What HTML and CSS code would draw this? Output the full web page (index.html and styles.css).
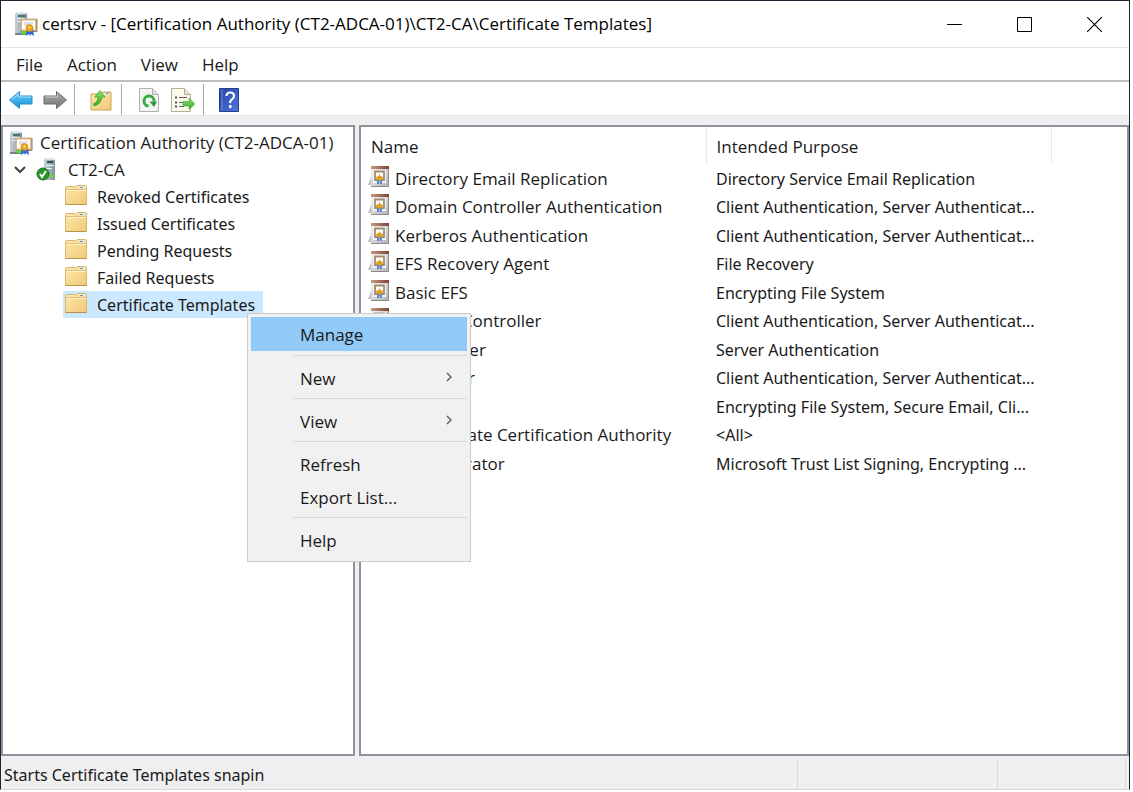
FILE: index.html
```html
<!DOCTYPE html>
<html lang="en">
<head>
<meta charset="utf-8">
<title>certsrv</title>
<link rel="stylesheet" href="styles.css">
</head>
<body>
<svg class="defs" width="0" height="0" aria-hidden="true">
  <defs>
    <linearGradient id="gTower" x1="0" x2="1" y1="0" y2="0"><stop offset="0" stop-color="#c3d2d8"/><stop offset="1" stop-color="#7e929c"/></linearGradient>
    <linearGradient id="gFolder" x1="0" x2="1" y1="0" y2="1"><stop offset="0" stop-color="#ffeaaa"/><stop offset="1" stop-color="#efc878"/></linearGradient>
    <linearGradient id="gBlue" x1="0" x2="0" y1="0" y2="1"><stop offset="0" stop-color="#6fcdf8"/><stop offset="1" stop-color="#1492dc"/></linearGradient>
    <linearGradient id="gGray" x1="0" x2="0" y1="0" y2="1"><stop offset="0" stop-color="#ababab"/><stop offset="1" stop-color="#747474"/></linearGradient>
    <linearGradient id="gGreen" x1="0" x2="0" y1="0" y2="1"><stop offset="0" stop-color="#8ce068"/><stop offset="1" stop-color="#35a62c"/></linearGradient>
    <linearGradient id="gHelp" x1="0" x2="1" y1="0" y2="1"><stop offset="0" stop-color="#2442a4"/><stop offset="1" stop-color="#4f7be0"/></linearGradient>
    <linearGradient id="gTop" x1="0" x2="1" y1="0" y2="0"><stop offset="0" stop-color="#c9967f"/><stop offset="1" stop-color="#7d4337"/></linearGradient>
    <linearGradient id="gPlate" x1="0" x2="1" y1="0" y2="1"><stop offset="0" stop-color="#f8f8f8"/><stop offset="1" stop-color="#b0b0b0"/></linearGradient>
    <symbol id="authority" viewBox="0 0 24 24">
      <path d="M1 2 3 0h10v23H1z" fill="url(#gTower)"/>
      <path d="M3 0h10v2H3z" fill="#dde6e9"/>
      <path d="M4 3h7v2H4z" fill="#4a7375"/><path d="M3 6h8v1H3zM3 9h3v1H3z" fill="#edf3f5"/>
      <path d="M1 21h12v2H1z" fill="#71838c"/>
      <path d="M7 7.500h15v11H7z" fill="#fff" stroke="#d3b184" stroke-width="1.800"/>
      <path d="M23 7v12.500H7" fill="none" stroke="#9a7a5c"/>
      <path d="M10 11h9M10 13h6" stroke="#b9c4e4"/>
      <path d="M8 19h4v3H8z" fill="#5ae020"/>
      <path d="m13 17-1 7 3-2 1 2 1-2 3 2-1-7z" fill="#3269df"/>
      <circle cx="15.500" cy="16" r="3.500" fill="#e5a51c" stroke="#cf9110" stroke-width=".8"/><circle cx="15.500" cy="15.500" r="1.200" fill="#ffd969"/>
    </symbol>
    <symbol id="server" viewBox="0 0 20 24">
      <path d="M8 2 10 0h9v22H8z" fill="url(#gTower)"/>
      <path d="M10 0h9v2h-9z" fill="#dde6e9"/><path d="M11 3h6v2h-6z" fill="#304e57"/>
      <path d="M10 7h8v1h-8zM10 10h6v1h-6z" fill="#f1f5f6"/><path d="M14 17h4v2h-4z" fill="#62e31f"/>
      <circle cx="7" cy="16" r="6" fill="#29952b" stroke="#177119"/><path d="m4 16 2 3 4-6" fill="none" stroke="#fff" stroke-width="2"/>
    </symbol>
    <symbol id="folder" viewBox="0 0 22 20">
      <path d="M.5 3q0-1.500 1.500-1.500h7.500l1 1L12 .5h8q1.500 0 1.500 1.500v17.500H.5z" fill="url(#gFolder)" stroke="#d9b66e"/>
      <path d="M12.500 1H20q1 0 1 1v2h-9.500z" fill="#f3e3b4"/><path d="M15 2h3v1h-3z" fill="#4aa1df"/><path d="M18 2h1v1h-1z" fill="#fff"/><path d="M1 4.500h20" stroke="#e0c07c"/><path d="M1 5.500h20" stroke="#fff1c4"/><path d="M.5 19.500h21" stroke="#b8924f"/>
    </symbol>
    <symbol id="template" viewBox="0 0 22 22">
      <path d="m4 9-4 10h4z" fill="#bcbcbc"/><path d="M3 0h18v21H3z" fill="url(#gPlate)"/>
      <path d="M3 0h18v3H3z" fill="url(#gTop)"/><path d="M20.500 3v17.500H3" fill="none" stroke="#8b8b8b"/>
      <path d="M5 4h13v13H5z" fill="#f4f4f4"/>
      <path d="M7 5.500h9v8.500H7z" fill="#fff" stroke="#a08c70" stroke-width="1.800"/>
      <path d="M9 12v6h2l.5-3 .5 3h2v-6z" fill="#5c86e0"/>
      <path d="m11.500 8 1 2 2.500 1-.5 2.500-2 .5-1 2-1-2-2-.5L8 11l2.500-1z" fill="#e0a21a"/>
    </symbol>
    <symbol id="go" viewBox="0 0 10 10"><path d="m3 1 4 4-4 4" fill="none" stroke="#555" stroke-width="1.300"/></symbol>
  </defs>
</svg>
<div class="window">
  <header class="titlebar">
    <svg class="app-icon" width="24" height="24"><use href="#authority"/></svg>
    <h1 class="title">certsrv - [Certification Authority (CT2-ADCA-01)\CT2-CA\Certificate Templates]</h1>
    <button class="caption" aria-label="Minimize"><svg width="15" height="15"><path d="M0 7.500h15" stroke="#000"/></svg></button>
    <button class="caption" aria-label="Maximize"><svg width="15" height="15"><path d="M.5.5h14v14H.5z" fill="none" stroke="#000"/></svg></button>
    <button class="caption" aria-label="Close"><svg width="15" height="15"><path d="m0 0 15 15M15 0 0 15" stroke="#000" stroke-width="1.200"/></svg></button>
  </header>
  <nav class="menubar">
    <button>File</button><button>Action</button><button>View</button><button>Help</button>
  </nav>
  <div class="toolbar">
    <div class="tools">
      <button aria-label="Back"><svg width="26" height="22" viewBox="0 0 26 22"><path d="m1.500 11 10-8.500v4.500H24v8H11.500v4.500z" fill="url(#gBlue)" stroke="#2f8cc8" stroke-linejoin="round"/><path d="m4 10.500 6.500-5.500v3H23" fill="none" stroke="#a5e3fc"/></svg></button>
      <button aria-label="Forward"><svg width="26" height="22" viewBox="0 0 26 22"><path d="m24.500 11-10-8.500v4.500H2v8h12.500v4.500z" fill="url(#gGray)" stroke="#6c6c6c" stroke-linejoin="round"/><path d="M3 8h12.500V5" fill="none" stroke="#c9c9c9"/></svg></button>
    </div>
    <div class="tools">
      <button aria-label="Up one level"><svg width="22" height="24" viewBox="0 0 22 24"><path d="M1 6h10l2-2h8v18H1z" fill="url(#gFolder)" stroke="#c8a45a"/><path d="M13 5h7v2h-7z" fill="#f7edcc"/><path d="M16 5h3v1h-3z" fill="#4b9ddd"/><path d="M3.500 15.500q4-1 4.500-6.500H4.500l5.500-6.500 5 6.500h-3q-.5 7-8 9z" fill="url(#gGreen)" stroke="#43a52f" stroke-width=".7"/></svg></button>
    </div>
    <div class="tools wide">
      <button aria-label="Refresh"><svg width="20" height="24" viewBox="0 0 20 24"><path d="M.5.5h13l6 6v17H.5z" fill="#f5f5f5" stroke="#b0b0b0"/><path d="M13.500.5v6h6" fill="#e2e2e2" stroke="#b0b0b0"/><path d="M9.500 18a5 5 0 1 1 5.500-4.500" fill="none" stroke="#38ab43" stroke-width="3"/><path d="M10.500 13.500H18l-3 5.500z" fill="#2e9a3a"/></svg></button>
      <button aria-label="Export list"><svg width="25" height="24" viewBox="0 0 25 24"><path d="M.5.5h13l6 6v17H.5z" fill="#fcf9e9" stroke="#b3af98"/><path d="M13.500.5v6h6" fill="#e8e3cd" stroke="#b3af98"/><path d="M4 9.500h2m-2 5h2m-2 4h2" stroke="#555" stroke-width="2"/><path d="M8 9.500h8m-8 5h5m-5 4h5" stroke="#6c5d76"/><path d="M12 13.500h6V10l6 6-6 5.500V18h-6z" fill="url(#gGreen)" stroke="#58b64a" stroke-width=".7"/></svg></button>
    </div>
    <div class="tools last">
      <button aria-label="Help"><svg width="20" height="24" viewBox="0 0 20 24"><path d="M.5.5h19v23H.5z" fill="url(#gHelp)" stroke="#263c86"/><path d="M3 1v22" stroke="#6f8dde"/><path d="M7.500 8q0-3.500 3.700-3.500T15 8q0 2-2 3.300t-2 3.700" fill="none" stroke="#fff" stroke-width="2.200"/><path d="M10 17h2.500v3H10z" fill="#fff"/></svg></button>
    </div>
  </div>
  <main class="panes">
    <section class="pane">
      <ul class="tree">
        <li><div class="node root"><svg width="24" height="24"><use href="#authority"/></svg><span>Certification Authority (CT2-ADCA-01)</span></div>
          <ul>
            <li><div class="node ca"><button class="expander" aria-label="Collapse"><svg width="12" height="8"><path d="m1 1 5 5 5-5" fill="none" stroke="#404040" stroke-width="2"/></svg></button><svg width="20" height="24"><use href="#server"/></svg><span>CT2-CA</span></div>
              <ul class="leaves">
                <li><div class="node"><svg width="22" height="20"><use href="#folder"/></svg><span>Revoked Certificates</span></div></li>
                <li><div class="node"><svg width="22" height="20"><use href="#folder"/></svg><span>Issued Certificates</span></div></li>
                <li><div class="node"><svg width="22" height="20"><use href="#folder"/></svg><span>Pending Requests</span></div></li>
                <li><div class="node"><svg width="22" height="20"><use href="#folder"/></svg><span>Failed Requests</span></div></li>
                <li class="anchor"><div class="node selected"><svg width="22" height="20"><use href="#folder"/></svg><span>Certificate Templates</span></div>
                  <div class="context" role="menu">
                    <button class="active" role="menuitem">Manage</button>
                    <hr>
                    <button role="menuitem">New<svg width="10" height="10"><use href="#go"/></svg></button>
                    <hr>
                    <button role="menuitem">View<svg width="10" height="10"><use href="#go"/></svg></button>
                    <hr>
                    <button role="menuitem">Refresh</button>
                    <button role="menuitem">Export List...</button>
                    <hr>
                    <button role="menuitem">Help</button>
                  </div>
                </li>
              </ul>
            </li>
          </ul>
        </li>
      </ul>
    </section>
    <section class="pane">
      <table class="list">
        <colgroup><col class="col"><col class="col"><col></colgroup>
        <thead><tr><th>Name</th><th>Intended Purpose</th><th></th></tr></thead>
        <tbody>
          <tr><td><svg width="22" height="22"><use href="#template"/></svg>Directory Email Replication</td><td>Directory Service Email Replication</td><td></td></tr>
          <tr><td><svg width="22" height="22"><use href="#template"/></svg>Domain Controller Authentication</td><td>Client Authentication, Server Authenticat...</td><td></td></tr>
          <tr><td><svg width="22" height="22"><use href="#template"/></svg>Kerberos Authentication</td><td>Client Authentication, Server Authenticat...</td><td></td></tr>
          <tr><td><svg width="22" height="22"><use href="#template"/></svg>EFS Recovery Agent</td><td>File Recovery</td><td></td></tr>
          <tr><td><svg width="22" height="22"><use href="#template"/></svg>Basic EFS</td><td>Encrypting File System</td><td></td></tr>
          <tr><td><svg width="22" height="22"><use href="#template"/></svg>Domain Controller</td><td>Client Authentication, Server Authenticat...</td><td></td></tr>
          <tr><td><svg width="22" height="22"><use href="#template"/></svg>Web Server</td><td>Server Authentication</td><td></td></tr>
          <tr><td><svg width="22" height="22"><use href="#template"/></svg>Computer</td><td>Client Authentication, Server Authenticat...</td><td></td></tr>
          <tr><td><svg width="22" height="22"><use href="#template"/></svg>User</td><td>Encrypting File System, Secure Email, Cli...</td><td></td></tr>
          <tr><td><svg width="22" height="22"><use href="#template"/></svg>Subordinate Certification Authority</td><td>&lt;All&gt;</td><td></td></tr>
          <tr><td><svg width="22" height="22"><use href="#template"/></svg>Administrator</td><td>Microsoft Trust List Signing, Encrypting ...</td><td></td></tr>
        </tbody>
      </table>
    </section>
  </main>
  <footer class="status"><span class="message">Starts Certificate Templates snapin</span><span class="cell"></span><span class="cell small"></span></footer>
</div>
</body>
</html>
```

FILE: styles.css
```css
* { box-sizing: border-box; }
body {
  display: flex;
  height: 100vh;
  margin: 0;
  padding: 0 3px 2px 0;
  font: 17px/24px "Open Sans", "Noto Sans", sans-serif;
  color: #1a1a1a;
  background: #fff;
}
button {
  margin: 0;
  padding: 0;
  border: 0;
  background: none;
  font: inherit;
  color: inherit;
}
svg { flex: none; display: block; }
.defs { position: absolute; }
ul { margin: 0; padding: 0; list-style: none; }

.window {
  display: flex;
  flex: 1;
  flex-direction: column;
  min-width: 0;
  border: 1px solid #1b2230;
  border-bottom-color: #d8d8d8;
  background: #efefef;
}

.titlebar {
  display: flex;
  align-items: center;
  height: 47px;
  padding-left: 13px;
  border-bottom: 1px solid #e5e5e5;
  background: #fff;
}
.title {
  flex: 1;
  margin: 0 0 0 4px;
  font-size: 17px;
  font-weight: 400;
  color: #000;
  white-space: nowrap;
}
.caption {
  display: grid;
  place-items: center;
  width: 70px;
  height: 44px;
}

.menubar {
  display: flex;
  gap: 24px;
  height: 34px;
  padding: 2px 15px 0;
  border-bottom: 2px solid #bdbdbd;
  background: #fff;
}

.toolbar {
  display: flex;
  align-items: center;
  height: 34px;
  padding-top: 2px;
  border-bottom: 1px solid #e3e3e3;
  background: #fff;
}
.tools {
  display: flex;
  align-items: center;
  gap: 8px;
  height: 31px;
  padding: 0 6px 0 7px;
  border-right: 1px solid #a9a9a9;
}
.tools + .tools { padding: 0 9px 0 15px; }
.tools.wide { gap: 12px; padding: 0 7px 0 17px; }
.tools.last { border: 0; }

.panes {
  display: grid;
  grid-template-columns: 354px 1fr;
  gap: 4px;
  flex: 1;
  min-height: 0;
  padding-top: 9px;
}
.pane {
  border: 2px solid #8e939c;
  background: #fff;
}

.tree { padding-top: 2px; white-space: nowrap; }
.node {
  display: flex;
  align-items: center;
  height: 27px;
}
.root { gap: 7px; padding-left: 6px; }
.expander {
  display: grid;
  place-items: center;
  width: 20px;
  height: 20px;
  margin-right: 6px;
}
.ca { padding-left: 7px; }
.ca span { padding-left: 12px; }
.leaves { padding-left: 60px; }
.leaves .node {
  gap: 10px;
  width: max-content;
  padding: 0 8px 0 2px;
  font-family: "Noto Sans", "Open Sans", sans-serif;
  font-size: 16px;
}
.leaves svg { margin-bottom: 3px; }
.leaves .selected { background: #cce8ff; }
.anchor { position: relative; }

.context {
  position: absolute;
  z-index: 1;
  top: 22px;
  left: 184px;
  width: 224px;
  padding: 3px 3px 5px;
  border: 1px solid #ccc;
  background: #f1f1f1;
}
.context button {
  display: flex;
  align-items: center;
  justify-content: space-between;
  width: 100%;
  height: 33px;
  padding: 2px 13px 0 49px;
}
.context .active { height: 34px; background: #91c9f7; }
.context svg { margin: 0 0 4px; }
.context hr {
  height: 1px;
  margin: 4px 0 5px 42px;
  border: 0;
  background: #d9d9d9;
}

.list {
  width: 100%;
  table-layout: fixed;
  border-collapse: collapse;
  white-space: nowrap;
}
.col { width: 345px; }
.list th {
  height: 37px;
  padding: 2px 0 0 10px;
  border-right: 1px solid #e9e9e9;
  font-weight: 400;
  text-align: left;
}
.list th:last-child { border: 0; }
.list td {
  height: 28px;
  padding: 1px 0 0 10px;
  font-family: "Noto Sans", "Open Sans", sans-serif;
  font-size: 16px;
}
.list tr:nth-child(even) td { height: 29px; }
.list td:first-child {
  padding: 0 0 0 7px;
  font-family: "Open Sans", "Noto Sans", sans-serif;
  font-size: 17px;
}
.list td svg {
  display: inline-block;
  margin-right: 5px;
  vertical-align: -3px;
}

.status {
  display: flex;
  height: 33px;
  padding: 3px 3px 0;
  font-family: "Noto Sans", "Open Sans", sans-serif;
  font-size: 16px;
}
.message { flex: 1; line-height: 32px; }
.cell { width: 200px; border-left: 1px solid #d9d9d9; }
.small { width: 129px; border-right: 1px solid #d9d9d9; }
```
